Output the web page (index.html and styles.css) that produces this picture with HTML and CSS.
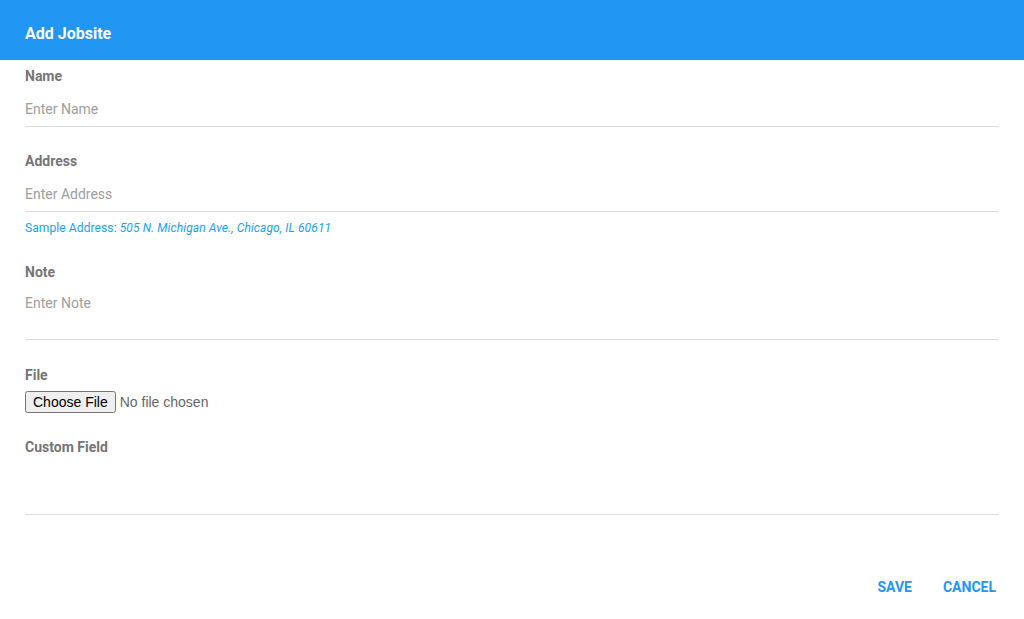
FILE: index.html
```html
<!DOCTYPE html>
<html lang="en">
<head>
<meta charset="utf-8">
<title>Add Jobsite</title>
<link rel="stylesheet" href="styles.css">
</head>
<body>
<div class="dialog">
  <header class="dialog-header">
    <h1 class="dialog-title">Add Jobsite</h1>
  </header>
  <form class="dialog-form">
    <div class="field field-first">
      <label class="field-label" for="name">Name</label>
      <input class="field-input" id="name" type="text" placeholder="Enter Name">
    </div>
    <div class="field">
      <label class="field-label" for="address">Address</label>
      <input class="field-input" id="address" type="text" placeholder="Enter Address">
      <p class="field-hint">Sample Address: <em>505 N. Michigan Ave., Chicago, IL 60611</em></p>
    </div>
    <div class="field">
      <label class="field-label" for="note">Note</label>
      <textarea class="field-input field-area" id="note" placeholder="Enter Note"></textarea>
    </div>
    <div class="field">
      <label class="field-label" for="file">File</label>
      <input class="field-file" id="file" type="file">
    </div>
    <div class="field">
      <label class="field-label" for="custom">Custom Field</label>
      <textarea class="field-input field-area" id="custom"></textarea>
    </div>
    <div class="dialog-actions">
      <button class="action-btn" type="button">Save</button>
      <button class="action-btn" type="button">Cancel</button>
    </div>
  </form>
</div>
</body>
</html>
```

FILE: styles.css
```css
html, body {
  margin: 0;
  padding: 0;
  background: #ffffff;
  font-family: Roboto, "Liberation Sans", Arial, sans-serif;
}

.dialog {
  width: 1024px;
  height: 619px;
  background: #ffffff;
}

.dialog-header {
  height: 60px;
  background: #2196f3;
  display: flex;
  align-items: center;
  padding-left: 25px;
  box-sizing: border-box;
}

.dialog-title {
  margin: 0;
  padding-top: 6px;
  font-size: 16px;
  font-weight: 700;
  color: #ffffff;
}

.dialog-form {
  padding: 0 25px;
  display: flex;
  flex-direction: column;
}

.field {
  display: flex;
  flex-direction: column;
  margin-top: 26px;
}

.field-first {
  margin-top: 8px;
}

.field-label {
  font-size: 14px;
  line-height: 16px;
  font-weight: 700;
  color: #757575;
}

.field-input {
  display: block;
  width: 100%;
  box-sizing: border-box;
  border: 0;
  border-bottom: 1px solid #dcdcdc;
  outline: none;
  padding: 15px 0 7px;
  height: 43px;
  font-family: Roboto, "Liberation Sans", Arial, sans-serif;
  font-size: 14px;
  line-height: 20px;
  color: #212121;
  background: transparent;
  resize: none;
}

.field-input::placeholder {
  color: #9e9e9e;
  opacity: 1;
}

.field-area {
  height: 60px;
  padding-top: 13px;
  padding-bottom: 0;
  margin-bottom: 1px;
}

.field-hint {
  margin: 8px 0 2px;
  font-size: 12px;
  line-height: 16px;
  letter-spacing: 0.1px;
  color: #16a3f0;
}

.field-hint em {
  font-style: italic;
}

.field-file {
  margin-top: 8px;
  font-family: "Liberation Sans", Arial, sans-serif;
  font-size: 14px;
  color: #666666;
}

.dialog-actions {
  display: flex;
  justify-content: flex-end;
  gap: 31px;
  margin-top: 63px;
  padding-right: 3px;
}

.action-btn {
  border: 0;
  background: transparent;
  padding: 0;
  font-family: Roboto, "Liberation Sans", Arial, sans-serif;
  font-size: 14px;
  line-height: 16px;
  font-weight: 700;
  text-transform: uppercase;
  color: #2196f3;
  cursor: pointer;
}
```
